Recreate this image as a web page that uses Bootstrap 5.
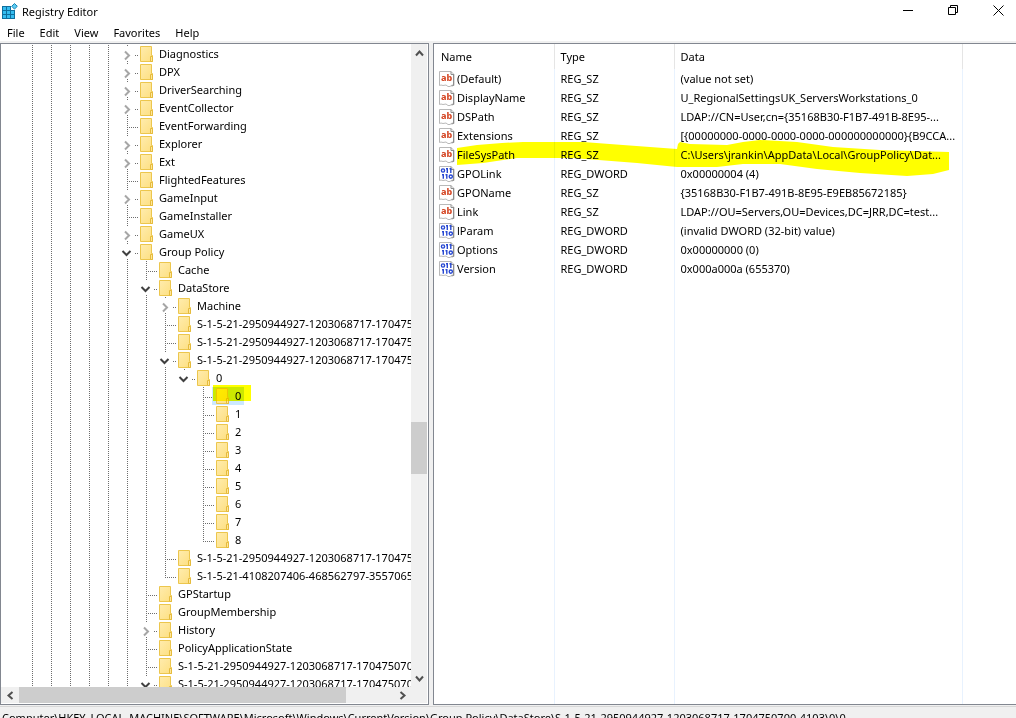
<!DOCTYPE html>
<html lang="en">
<head>
<meta charset="utf-8">
<meta name="viewport" content="width=device-width, initial-scale=1">
<title>Registry Editor</title>
<link href="https://cdn.jsdelivr.net/npm/bootstrap@5.3.0/dist/css/bootstrap.min.css" rel="stylesheet">
<style>
  body { font: 11px/18px "Noto Sans", "Open Sans", sans-serif; color: #000; background: #f0f0f0; }
  svg { display: block; flex: none; }
  .title-bar { height: 24px; }
  .win-controls { gap: 10px; }
  .win-btn { width: 35px; height: 20px; }
  .menu-bar { height: 17px; margin-bottom: 2px; padding-left: 7px; gap: 15px; }
  .menu-bar a { color: #000; text-decoration: none; }
  .workspace { flex: 0 0 calc(100vh - 56px); min-height: 0; gap: 4px; }
  .pane { background: #fff; border: 1px solid #828790; }
  .tree-pane { flex: 0 0 429px; min-width: 0; padding-right: 1px; padding-bottom: 1px; }
  .value-pane { border-right: 0; }
  .track { background: #f0f0f0; }
  .thumb { background: #cdcdcd; }
  .v-scroll { width: 16px; flex: none; }
  .h-scroll { height: 16px; }
  .end-btn { height: 18px; width: 18px; }

  /* tree */
  .tree-list { padding: 1px 0 0 22px; }
  .tree-row { height: 18px; }
  .guide, .branch { flex: none; height: 18px; width: 19px; }
  .branch { width: 22px; }
  .guide.on { background: repeating-linear-gradient(#6d6d6d 0 1px, transparent 1px 2px) 9px 0 / 1px 100% no-repeat; }
  .branch.mid, .branch.end { background:
      repeating-linear-gradient(#6d6d6d 0 1px, transparent 1px 2px) 9px 0 / 1px 100% no-repeat,
      repeating-linear-gradient(90deg, #6d6d6d 0 1px, transparent 1px 2px) 9px 10px / 11px 1px no-repeat; }
  .branch.end { background-size: 1px 11px, 11px 1px; }
  .node-label { padding: 0 3px 0 6px; }
  .selected { background: #cce8ff; padding-left: 4px; margin-left: -4px; }
  .marker { position: absolute; left: 1px; top: -2px; width: 38px; height: 16px; background: #ff0; mix-blend-mode: multiply; }

  /* values */
  .values { table-layout: fixed; width: 100%; height: 100%; }
  .values th, .values td { height: 19px; padding: 0 0 0 6px; border-right: 1px solid #e8f2fe; line-height: 18px; white-space: nowrap; overflow: hidden; }
  .values th { height: 25px; font-weight: 400; border-color: #e5e5e5; }
  .values th:first-child { padding-left: 7px; }
  .values td:first-child { padding-left: 5px; }
  .values th:last-child, .values td:last-child { border-right: 0; }
  .values .filler td { height: auto; }
  .value-name { padding-left: 2px; }
  .c-name { width: 120px; } .c-type { width: 120px; } .c-data { width: 288px; }
  .stroke-mark { position: absolute; left: 23px; top: 96px; mix-blend-mode: multiply; pointer-events: none; }
  .status { border-top: 1px solid #d7d7d7; margin-top: 1px; padding: 2px 0 0 2px; white-space: nowrap; flex: none; }
</style>
</head>
<body class="vh-100 overflow-hidden d-flex flex-column">

<svg width="0" height="0" class="position-absolute" aria-hidden="true">
  <defs>
    <linearGradient id="fold" x1="0" y1="0" x2="1" y2="1"><stop offset="0" stop-color="#ffecae"/><stop offset="1" stop-color="#fddf80"/></linearGradient>
    <symbol id="folder" viewBox="0 0 13 16">
      <path d="M.5.5h11v9h1v6H.5z" fill="url(#fold)" stroke="#ecc64d"/>
      <path d="M10.500 15.500v-5h2v5z" fill="#ffe69a" stroke="#e5bb3c"/>
    </symbol>
    <symbol id="page" viewBox="0 0 16 16">
      <path d="M.5.5h11.500l3 3v11l-2-.5-2 1.500h-2l-2-1.500-3 .5-2-.5-1.500.5z" fill="#fff" stroke="#b9b9b9"/>
      <path d="M12 .5v3h3M14.500 4v10.500l-2 .5" fill="none" stroke="#8d8d8d"/>
    </symbol>
    <symbol id="string" viewBox="0 0 16 16">
      <use href="#page"/>
      <text x="2" y="10" font-family="Noto Sans" font-size="9" font-weight="800" fill="#d64a28">ab</text>
    </symbol>
    <symbol id="binary" viewBox="0 0 16 16">
      <use href="#page"/>
      <g fill="none" stroke="#2748d2" stroke-width="1.400">
        <circle cx="4" cy="4.500" r="1.600"/><path d="M7 2.800h1.300V7M10.500 2.800h1.300V7M3 8.800h1.300v4M6.500 8.800h1.300v4"/><circle cx="11.800" cy="10.600" r="1.600"/>
      </g>
    </symbol>
  </defs>
</svg>

<header>
  <div class="title-bar d-flex align-items-center bg-white">
    <svg class="align-self-start" width="18" height="20" viewBox="0 0 18 20" aria-hidden="true">
      <path d="M2 6h9v4h4v9H2z" fill="#0f6f9e"/>
      <path d="M3 7h3v3H3zM7 7h3v3H7zM3 11h3v3H3zM7 11h3v3H7zM11 11h3v3h-3zM3 15h3v3H3zM7 15h3v3H7zM11 15h3v3h-3z" fill="#35bdf0"/>
      <path d="M14.500 3.500l2.800 2.800-2.800 2.800-2.800-2.800z" fill="#5ccbf2" stroke="#1584b4"/>
    </svg>
    <span class="ps-1 flex-grow-1">Registry Editor</span>
    <div class="win-controls d-flex align-self-start">
      <button class="win-btn btn p-0 border-0 rounded-0" aria-label="Minimize"><svg class="mx-auto" width="11" height="11"><path d="M0 5.500h10" stroke="#000"/></svg></button>
      <button class="win-btn btn p-0 border-0 rounded-0" aria-label="Restore"><svg class="mx-auto" width="11" height="11" fill="none" stroke="#000"><path d="M.5 2.500h7v7h-7zM2.500 2.500v-2h7v7h-2"/></svg></button>
      <button class="win-btn btn p-0 border-0 rounded-0" aria-label="Close"><svg class="mx-auto" width="11" height="11"><path d="M.5.5l10 10M10.500.5l-10 10" stroke="#000"/></svg></button>
    </div>
  </div>
  <nav class="menu-bar d-flex align-items-center" aria-label="Menu" style="background:#fff">
    <a href="#">File</a><a href="#">Edit</a><a href="#">View</a><a href="#">Favorites</a><a href="#">Help</a>
  </nav>
</header>

<main class="workspace d-flex">
  <section class="pane tree-pane d-flex flex-column">
    <div class="d-flex flex-grow-1 overflow-hidden">
      <div class="flex-grow-1 overflow-hidden"><div class="tree-list" id="tree" role="tree" aria-label="Keys"></div></div>
      <div class="v-scroll track d-flex flex-column align-items-center">
        <svg class="my-1" width="9" height="9" fill="none" stroke="#505050" stroke-width="2"><path d="M1 7.500l3.500-4L8 7.500"/></svg>
        <div style="flex:360 0 0"></div>
        <div class="thumb w-100" style="flex:52 0 0"></div>
        <div style="flex:196 0 0"></div>
        <svg class="my-1" width="9" height="9" fill="none" stroke="#505050" stroke-width="2"><path d="M1 2.500l3.500 4L8 2.500"/></svg>
      </div>
    </div>
    <div class="h-scroll track d-flex align-items-center flex-shrink-0">
      <div class="end-btn d-flex align-items-center justify-content-center"><svg width="9" height="9" fill="none" stroke="#505050" stroke-width="2"><path d="M6.500 1l-4 3.500 4 3.500"/></svg></div>
      <div class="thumb h-100" style="flex:327 0 0"></div>
      <div style="flex:47 0 0"></div>
      <div class="end-btn d-flex align-items-center justify-content-center"><svg width="9" height="9" fill="none" stroke="#505050" stroke-width="2"><path d="M2.500 1l4 3.500-4 3.500"/></svg></div>
      <div class="v-scroll"></div>
    </div>
  </section>

  <section class="pane value-pane flex-grow-1 position-relative overflow-hidden">
    <table class="values">
      <colgroup><col class="c-name"><col class="c-type"><col class="c-data"><col></colgroup>
      <thead><tr><th scope="col">Name</th><th scope="col">Type</th><th scope="col">Data</th><th></th></tr></thead>
      <tbody id="values"></tbody>
    </table>
    <svg class="stroke-mark" width="493" height="37" aria-hidden="true">
      <path fill="#ff0" d="M0 8L20 5 45 3 66 2h60L166 5l27 2 27 2 1-5 2-2 10 2 37 1 16-3 17-2 37 2 36 5 47 3 69 2v18l-16 4-26 2-47-3-43-4-37-5h-37l-26 3h-40l-40-4-64-5H60l-34 5L0 25z"/>
    </svg>
  </section>
</main>

<footer class="status">Computer\HKEY_LOCAL_MACHINE\SOFTWARE\Microsoft\Windows\CurrentVersion\Group Policy\DataStore\S-1-5-21-2950944927-1203068717-1704750700-4103\0\0</footer>

<script>
  const SID = 'S-1-5-21-2950944927-1203068717-1704750700';
  // [depth, label, state]: '+' collapsed, '-' expanded, '' leaf
  const keys = [
    [5,'Diagnostics','+'],[5,'DPX','+'],[5,'DriverSearching','+'],[5,'EventCollector','+'],[5,'EventForwarding',''],
    [5,'Explorer','+'],[5,'Ext','+'],[5,'FlightedFeatures',''],[5,'GameInput','+'],[5,'GameInstaller',''],[5,'GameUX','+'],
    [5,'Group Policy','-'],[6,'Cache',''],[6,'DataStore','-'],[7,'Machine','+'],[7,SID,''],[7,SID,''],[7,SID,'-'],
    [8,'0','-'],[9,'0','','selected'],[9,'1',''],[9,'2',''],[9,'3',''],[9,'4',''],[9,'5',''],[9,'6',''],[9,'7',''],[9,'8',''],
    [7,SID,''],[7,'S-1-5-21-4108207406-468562797-3557065',''],
    [6,'GPStartup',''],[6,'GroupMembership',''],[6,'History','+'],[6,'PolicyApplicationState',''],[6,SID,''],[6,SID,'-']
  ];
  // a level keeps its line while a later row returns to it before a shallower one
  const continues = (i, level) => {
    for (let j = i + 1; j < keys.length; j++) {
      if (keys[j][0] === level) return true;
      if (keys[j][0] < level) return false;
    }
    return level <= 6;
  };
  const dot = (x, y) => `<path d="M${x} ${y}h1v1h-1z" fill="#6d6d6d"/>`;
  const arrow = {
    '+': '<path d="M7 6.500l4 4-4 4" fill="none" stroke="#a6a6a6" stroke-width="2"/>',
    '-': '<path d="M4.500 8l4 4 4-4" fill="none" stroke="#404040" stroke-width="2"/>'
  };
  document.getElementById('tree').innerHTML = keys.map(([depth, label, state, sel], i) => {
    let cells = '';
    for (let l = 0; l < depth; l++) cells += `<span class="guide${continues(i, l) ? ' on' : ''}"></span>`;
    const more = continues(i, depth);
    cells += state
      ? `<svg class="branch" viewBox="0 0 22 18" aria-hidden="true">${dot(9,0)}${more ? dot(9,16) : ''}${dot(17,10)}${dot(19,10)}${arrow[state]}</svg>`
      : `<span class="branch ${more ? 'mid' : 'end'}"></span>`;
    return `<div class="tree-row d-flex text-nowrap" role="treeitem" aria-level="${depth + 1}">${cells}` +
      `<div class="d-flex align-items-center position-relative ${sel || ''}"><svg width="13" height="16" aria-hidden="true"><use href="#folder"/></svg>` +
      `<span class="node-label">${label}</span>${sel ? '<span class="marker"></span>' : ''}</div></div>`;
  }).join('');

  const values = [
    ['(Default)','REG_SZ','(value not set)'],
    ['DisplayName','REG_SZ','U_RegionalSettingsUK_ServersWorkstations_0'],
    ['DSPath','REG_SZ','LDAP://CN=User,cn={35168B30-F1B7-491B-8E95-...'],
    ['Extensions','REG_SZ','[{00000000-0000-0000-0000-000000000000}{B9CCA...'],
    ['FileSysPath','REG_SZ','C:\\Users\\jrankin\\AppData\\Local\\GroupPolicy\\Dat...'],
    ['GPOLink','REG_DWORD','0x00000004 (4)'],
    ['GPOName','REG_SZ','{35168B30-F1B7-491B-8E95-E9EB85672185}'],
    ['Link','REG_SZ','LDAP://OU=Servers,OU=Devices,DC=JRR,DC=test...'],
    ['lParam','REG_DWORD','(invalid DWORD (32-bit) value)'],
    ['Options','REG_DWORD','0x00000000 (0)'],
    ['Version','REG_DWORD','0x000a000a (655370)']
  ];
  document.getElementById('values').innerHTML = values.map(([name, type, data]) =>
    `<tr><td><div class="d-flex align-items-center"><svg width="16" height="16" aria-hidden="true"><use href="#${type === 'REG_SZ' ? 'string' : 'binary'}"/></svg><span class="value-name">${name}</span></div></td><td>${type}</td><td>${data}</td><td></td></tr>`
  ).join('') + '<tr class="filler"><td></td><td></td><td></td><td></td></tr>';
</script>
<script src="https://cdn.jsdelivr.net/npm/bootstrap@5.3.0/dist/js/bootstrap.bundle.min.js"></script>
</body>
</html>
